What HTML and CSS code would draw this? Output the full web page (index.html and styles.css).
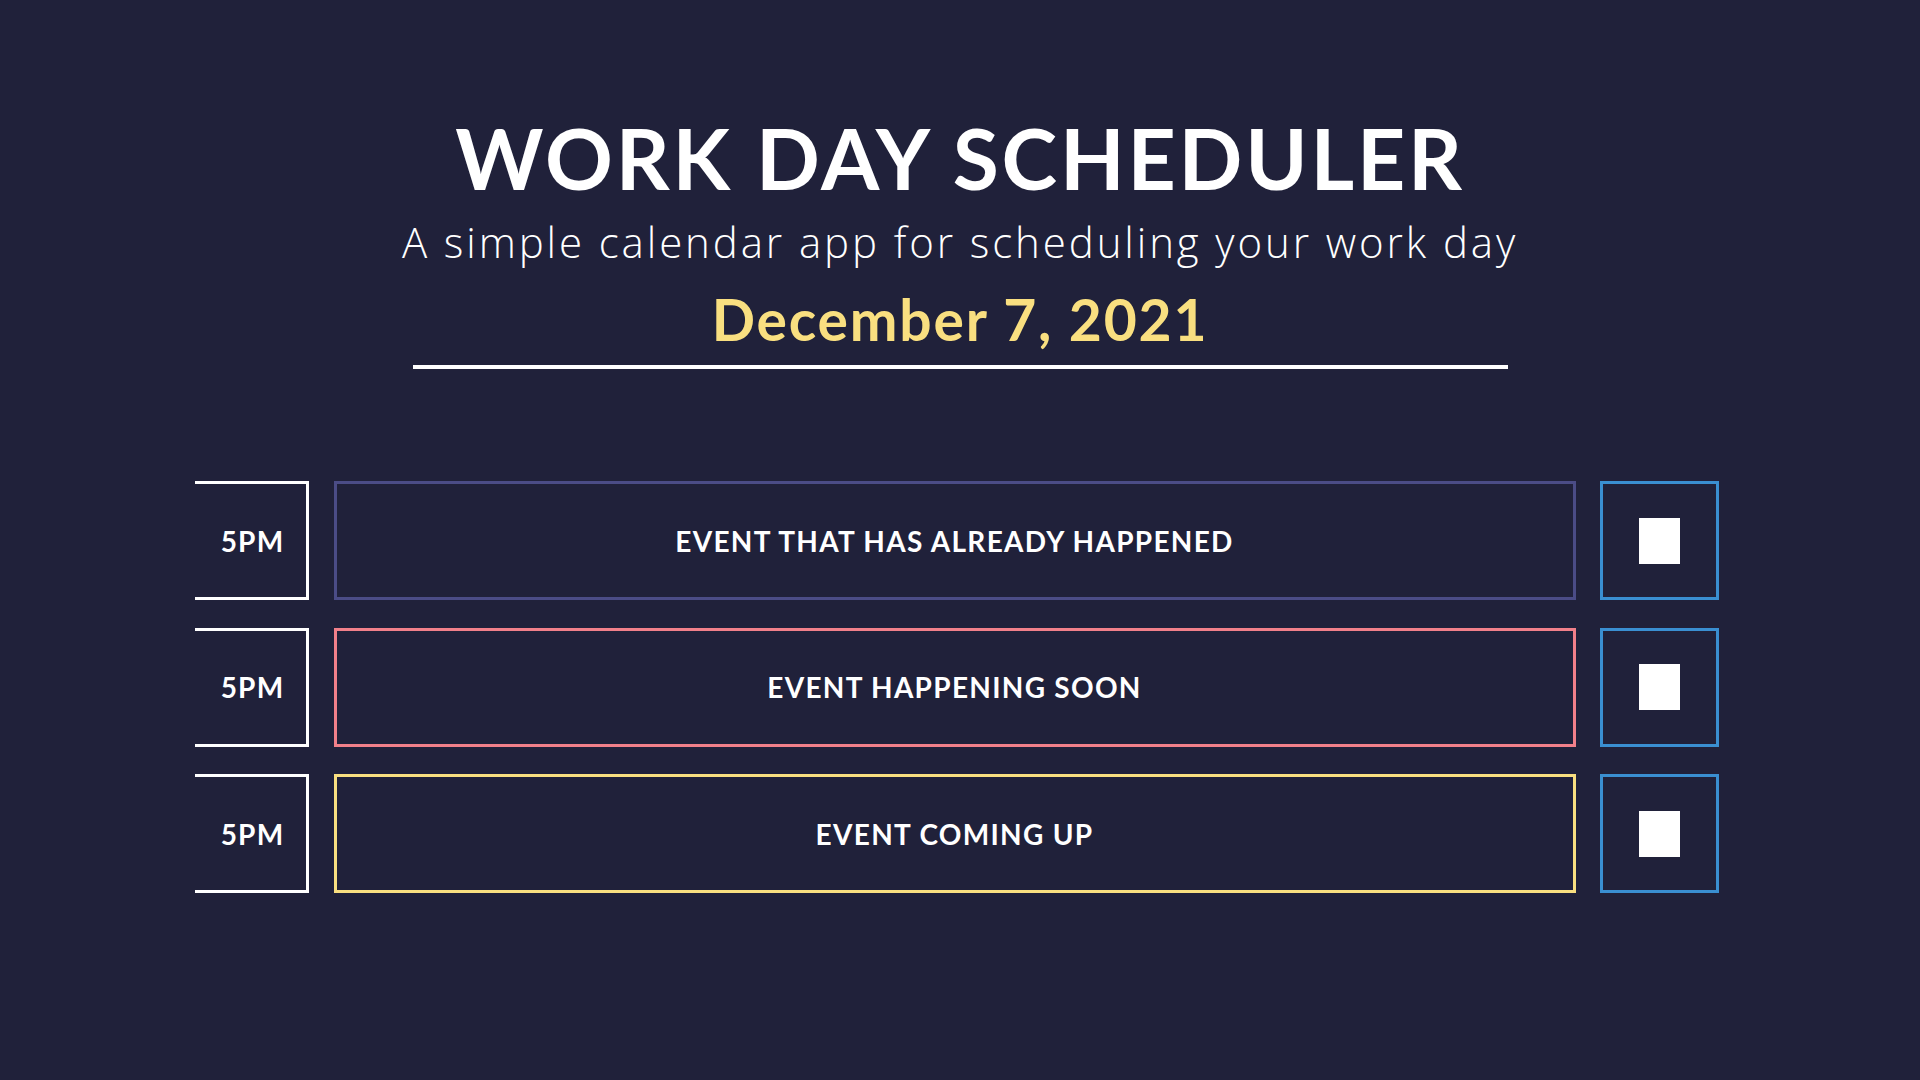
FILE: index.html
```html
<!DOCTYPE html>
<html lang="en">
<head>
<meta charset="utf-8">
<title>Work Day Scheduler</title>
<link rel="stylesheet" href="styles.css">
</head>
<body>
<header class="header">
  <h1 class="title">WORK DAY SCHEDULER</h1>
  <p class="lead">A simple calendar app for scheduling your work day</p>
  <p class="date">December 7, 2021</p>
  <div class="rule"></div>
</header>
<main class="schedule">
  <div class="row">
    <div class="hour">5PM</div>
    <div class="event past">EVENT THAT HAS ALREADY HAPPENED</div>
    <button class="save" type="button" aria-label="Save"><span class="save-icon"></span></button>
  </div>
  <div class="row">
    <div class="hour">5PM</div>
    <div class="event present">EVENT HAPPENING SOON</div>
    <button class="save" type="button" aria-label="Save"><span class="save-icon"></span></button>
  </div>
  <div class="row">
    <div class="hour">5PM</div>
    <div class="event future">EVENT COMING UP</div>
    <button class="save" type="button" aria-label="Save"><span class="save-icon"></span></button>
  </div>
</main>
</body>
</html>
```
FILE: styles.css
```css
* { box-sizing: border-box; }
html, body {
  margin: 0;
  padding: 0;
  background: #20213a;
  color: #ffffff;
  font-family: Lato, "Noto Sans", sans-serif;
}
body { min-height: 1080px; }

.header {
  display: flex;
  flex-direction: column;
  align-items: center;
  padding-top: 108px;
}
.title {
  margin: 0;
  font-size: 84px;
  line-height: 100px;
  font-weight: 700;
  letter-spacing: 2.8px;
}
.lead {
  margin: 9px 0 0;
  font-family: "Open Sans", Lato, sans-serif;
  font-size: 42px;
  line-height: 50px;
  font-weight: 300;
  letter-spacing: 2.9px;
}
.date {
  margin: 17px 0 0;
  font-size: 57px;
  line-height: 70px;
  font-weight: 700;
  letter-spacing: 1.8px;
  color: #f9df80;
}
.rule {
  margin-top: 11px;
  width: 1095px;
  height: 4px;
  background: #ffffff;
}

.schedule {
  display: flex;
  flex-direction: column;
  gap: 27.5px;
  width: 1524px;
  margin: 112px 0 0 calc(50% - 765px);
}
.row {
  display: grid;
  grid-template-columns: 114px 1242px 119px;
  column-gap: 24.5px;
  height: 119px;
}
.hour {
  display: flex;
  align-items: center;
  justify-content: center;
  border: 3px solid #ffffff;
  border-left: none;
  font-size: 28px;
  font-weight: 700;
  letter-spacing: 1.2px;
  padding-left: 4px;
}
.event {
  display: flex;
  align-items: center;
  justify-content: center;
  border: 3px solid;
  font-size: 28px;
  font-weight: 700;
  letter-spacing: 1.3px;
  text-transform: uppercase;
}
.past { border-color: #4b4c86; }
.present { border-color: #f2808a; }
.future { border-color: #f9df80; }
.save {
  display: flex;
  align-items: center;
  justify-content: center;
  background: transparent;
  border: 3px solid #3a8fd1;
  padding: 0;
  margin: 0;
}
.save-icon {
  display: block;
  width: 41px;
  height: 46px;
  background: #ffffff;
}
```
